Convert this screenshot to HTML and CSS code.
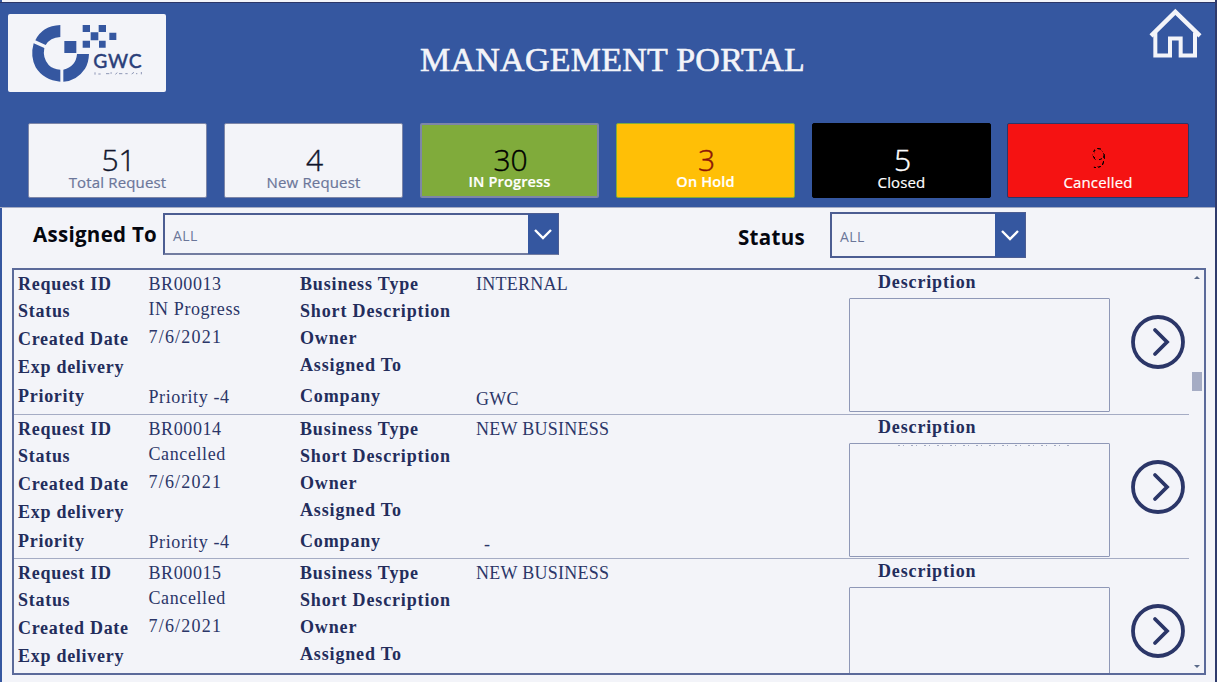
FILE: index.html
```
<!DOCTYPE html>
<html lang="en">
<head>
<meta charset="utf-8">
<title>Management Portal</title>
<link rel="stylesheet" href="styles.css">
</head>
<body>
<div class="app">
  <header class="header">
    <div class="topbar">
      <svg class="logo" viewBox="25 43 474 234">
        <g fill="#3557a0">
          <path d="M182 76V112Q151 114 138 136L107 122Q127 79 182 76Z"/>
          <path d="M102 131L134 145Q128 174 147 196Q160 209 182 210V246Q132 242 108 203Q91 169 102 131Z"/>
          <path d="M191 246V210Q229 201 232 163H268Q267 190 256 207Q232 243 191 246Z"/>
          <path d="M194 124H230V160H194ZM249 76H271V97H249ZM297 76H319V97H297ZM273 98H296V122H273ZM329 99H350V121H329ZM249 123H271V144H249ZM298 123H318V144H298Z"/>
        </g>
        <text x="281" y="206" class="logo-text" textLength="145">GWC</text>
        <path d="M286 218v7m10-2h7m16-1h10m3-2h5m10 4l6-5m5 3h10m9 0h7m12 1l7-5m6 4h4m12-5v7" fill="none" stroke="#8d96b5" stroke-width="3"/>
      </svg>
      <h1 class="title">MANAGEMENT PORTAL</h1>
      <svg class="home" viewBox="450 24 162 152" fill="none" stroke="#f3f4f9" stroke-width="12">
        <path d="M456 107L529 35L603 107" stroke-width="13"/>
        <path d="M469 97V166H513V115H545V166H588V97" stroke-linejoin="miter"/>
      </svg>
    </div>
    <div class="stats">
      <div class="stat"><span class="num">51</span><span class="cap">Total Request</span></div>
      <div class="stat"><span class="num">4</span><span class="cap">New Request</span></div>
      <div class="stat progress"><span class="num">30</span><span class="cap">IN Progress</span></div>
      <div class="stat hold"><span class="num">3</span><span class="cap">On Hold</span></div>
      <div class="stat closed"><span class="num">5</span><span class="cap">Closed</span></div>
      <div class="stat cancelled"><span class="num">9</span><span class="cap">Cancelled</span></div>
    </div>
  </header>

  <div class="filters">
    <span class="flabel assigned">Assigned To</span>
    <div class="select wide"><span>ALL</span><i><svg viewBox="0 0 20 12"><path d="M2 2L10 10L18 2"/></svg></i></div>
    <span class="flabel status">Status</span>
    <div class="select small"><span>ALL</span><i><svg viewBox="0 0 20 12"><path d="M2 2L10 10L18 2"/></svg></i></div>
  </div>

  <main class="list">
    <div class="records">
      <section class="record">
        <div class="col c1"><b>Request ID</b><b>Status</b><b>Created Date</b><b>Exp delivery</b><b>Priority</b></div>
        <div class="col c2"><span>BR00013</span><span>IN Progress</span><span class="date">7/6/2021</span><span></span><span>Priority -4</span></div>
        <div class="col c3"><b>Business Type</b><b>Short Description</b><b>Owner</b><b>Assigned To</b><b>Company</b></div>
        <div class="col c4"><span>INTERNAL</span><span></span><span></span><span></span><span>GWC</span></div>
        <div class="desc"><b>Description</b><div class="box"></div></div>
        <svg class="go" viewBox="0 0 54 54"><circle cx="27" cy="27" r="25"/><path d="M24 15L36 27L24 39"/></svg>
      </section>
      <section class="record">
        <div class="col c1"><b>Request ID</b><b>Status</b><b>Created Date</b><b>Exp delivery</b><b>Priority</b></div>
        <div class="col c2"><span>BR00014</span><span>Cancelled</span><span class="date">7/6/2021</span><span></span><span>Priority -4</span></div>
        <div class="col c3"><b>Business Type</b><b>Short Description</b><b>Owner</b><b>Assigned To</b><b>Company</b></div>
        <div class="col c4"><span>NEW BUSINESS</span><span></span><span></span><span></span><span class="dash">-</span></div>
        <div class="desc"><b>Description</b><div class="box clipped"></div></div>
        <svg class="go" viewBox="0 0 54 54"><circle cx="27" cy="27" r="25"/><path d="M24 15L36 27L24 39"/></svg>
      </section>
      <section class="record">
        <div class="col c1"><b>Request ID</b><b>Status</b><b>Created Date</b><b>Exp delivery</b></div>
        <div class="col c2"><span>BR00015</span><span>Cancelled</span><span class="date">7/6/2021</span></div>
        <div class="col c3"><b>Business Type</b><b>Short Description</b><b>Owner</b><b>Assigned To</b></div>
        <div class="col c4"><span>NEW BUSINESS</span></div>
        <div class="desc"><b>Description</b><div class="box"></div></div>
        <svg class="go" viewBox="0 0 54 54"><circle cx="27" cy="27" r="25"/><path d="M24 15L36 27L24 39"/></svg>
      </section>
    </div>
    <div class="scrollbar">
      <svg viewBox="0 0 6 3"><path d="M0 3L3 0L6 3Z"/></svg>
      <div class="thumb"></div>
      <svg viewBox="0 0 6 3"><path d="M0 0L3 3L6 0Z"/></svg>
    </div>
  </main>
</div>
</body>
</html>
```
FILE: styles.css
```
* { box-sizing: border-box; }
body { margin: 0; background: #f3f4f9; overflow: hidden; }
.app {
  width: 1217px; height: 682px; padding-top: 2px;
  border-left: 2px solid #3557a0; border-right: 2px solid #2f3b6c;
  display: flex; flex-direction: column;
}
.header {
  height: 206px; margin: 0 0 0 -2px; flex: none;
  background: #3557a0; border-top: 1px solid #2b3668; border-bottom: 1px solid #a5acc4;
}
.topbar { display: flex; height: 120px; padding-left: 8px; align-items: flex-start; }
.logo {
  width: 158px; height: 78px; margin-top: 11px; flex: none;
  background: #f3f4f9; border-radius: 2px;
}
.logo-text { font: 500 58px Lato, sans-serif; fill: #2b3f7a; stroke: #2b3f7a; stroke-width: 1; }
.title {
  margin: 37px 0 0 254px; width: 390px; flex: none;
  font: 400 34px/40px "Liberation Serif", serif; letter-spacing: .25px;
  color: #f3f4f9; white-space: nowrap; -webkit-text-stroke: .6px #f3f4f9;
}
.home { width: 54px; height: 51px; margin: 5px 0 0 339px; flex: none; }
.stats {
  display: grid; grid-template-columns: repeat(6, 179px); column-gap: 17px;
  padding-left: 28px;
}
.stat {
  height: 75px; padding-top: 20px; border: 1px solid #7d86a8; border-radius: 2px;
  background: #f3f4f9; color: #10152c;
  display: flex; flex-direction: column; align-items: center;
  font-family: "Open Sans", sans-serif;
}
.num {
  font-size: 30px; line-height: 32px; height: 28px; font-weight: 300;
  padding-left: 2px; -webkit-text-stroke: .4px currentColor;
}
.cap { font-size: 15px; line-height: 20px; letter-spacing: .15px; color: #6b7699; -webkit-text-stroke: .2px currentColor; }
.progress { background: #80ab3b; border-width: 2px; padding-top: 19px; color: #000; }
.hold { background: #ffbf06; border-color: #80ab3b; }
.hold .num { color: #8c1408; }
.closed { background: #000; border-color: #000; color: #fff; }
.cancelled { background: #f51212; border-color: #2b3668; width: 182px; margin-left: -1px; color: #000; }
.cancelled .num {
  font-size: 27px; -webkit-text-stroke: 0; line-height: 28px;
  -webkit-mask-image: repeating-linear-gradient(55deg, #000 0 3px, transparent 3px 5px);
  mask-image: repeating-linear-gradient(55deg, #000 0 3px, transparent 3px 5px);
}
.progress .cap, .hold .cap, .closed .cap, .cancelled .cap { color: #fff; }
.progress .cap, .hold .cap { font-weight: 600; font-size: 14.5px; }

.filters { display: flex; height: 60px; padding-top: 4px; flex: none; align-items: flex-start; }
.flabel { font: 700 20.5px/30px "Open Sans", sans-serif; letter-spacing: .3px; color: #05070f; white-space: nowrap; flex: none; }
.assigned { width: 129px; margin: 7px 0 0 31px; }
.status { width: 92px; margin: 10px 0 0 179px; }
.select {
  display: flex; align-items: center; justify-content: space-between; flex: none;
  border: 2px solid #4c5d92; font: 14px "Open Sans", sans-serif; letter-spacing: .4px; color: #6b7699;
}
.select span { padding: 2px 0 0 8px; }
.wide { width: 396px; height: 42px; margin-left: 1px; margin-top: 1px; border-bottom-color: #727ca0; }
.small { width: 196px; height: 46px; }
.select i {
  align-self: stretch; width: 30px; margin: -1px -1px; background: #3557a0;
  display: flex; align-items: center; justify-content: center;
}
.select svg { width: 20px; height: 12px; }
.select path { fill: none; stroke: #fff; stroke-width: 2.4; }

.list {
  margin-left: 10px; width: 1194px; height: 407px; flex: none;
  border: 2px solid #5b6a9a; display: flex; overflow: hidden;
}
.records { width: 1175px; height: 403px; overflow: hidden; flex: none; }
.record {
  height: 144.5px; border-bottom: 1px solid #a5acc4; padding-left: 4px;
  display: grid; grid-template-columns: 130.5px 151.5px 176px 373px 282px 54px;
}
.col { display: grid; align-items: end; justify-items: start; height: 138px; align-content: start; }
.record b, .record span {
  font-family: "Liberation Serif", serif; line-height: 20px; white-space: nowrap; color: #2b3668;
}
.record b { font-size: 18px; letter-spacing: .85px; color: #232d5c; }
.record .c1 b { letter-spacing: .72px; }
.record span { font-size: 18px; letter-spacing: .25px; min-height: 1px; }
.record .c2 span { letter-spacing: .6px; }
.record .c2 .date { letter-spacing: 1.2px; }
.c1 { grid-template-rows: 24px 27px 28px 28px 29px; }
.c2 { grid-template-rows: 24px 25px 28px 29px 31px; }
.c3 { grid-template-rows: 24px 27px 27px 27px 31px; }
.c4 { grid-template-rows: 24px 27px 27px 27px 34px; }
.record .dash { margin-left: 8px; }
.desc { padding-top: 2px; }
.desc b { display: block; padding-left: 29px; }
.box { width: 261px; height: 114px; margin-top: 6px; border: 1.5px solid #8f98b7; border-radius: 1px; }
/* Tops of glyphs from a description scrolled out of view */
.clipped {
  background: repeating-linear-gradient(90deg, #a5acc4 0 2px, transparent 2px 5px, #a5acc4 5px 6px, transparent 6px 13px) 48px 1px / 172px 1px no-repeat;
}
.go { width: 54px; height: 54px; margin-top: 45px; margin-left: -.5px; fill: none; stroke: #2b3668; stroke-width: 3.8; stroke-linecap: round; }
.scrollbar { width: 15px; display: flex; flex-direction: column; align-items: center; padding: 6px 0 5px; }
.scrollbar svg { width: 6px; height: 3px; fill: #5b6a8a; flex: none; }
.thumb { width: 10px; height: 19px; margin: 93px 0 auto; background: #a5acc4; flex: none; }
```
